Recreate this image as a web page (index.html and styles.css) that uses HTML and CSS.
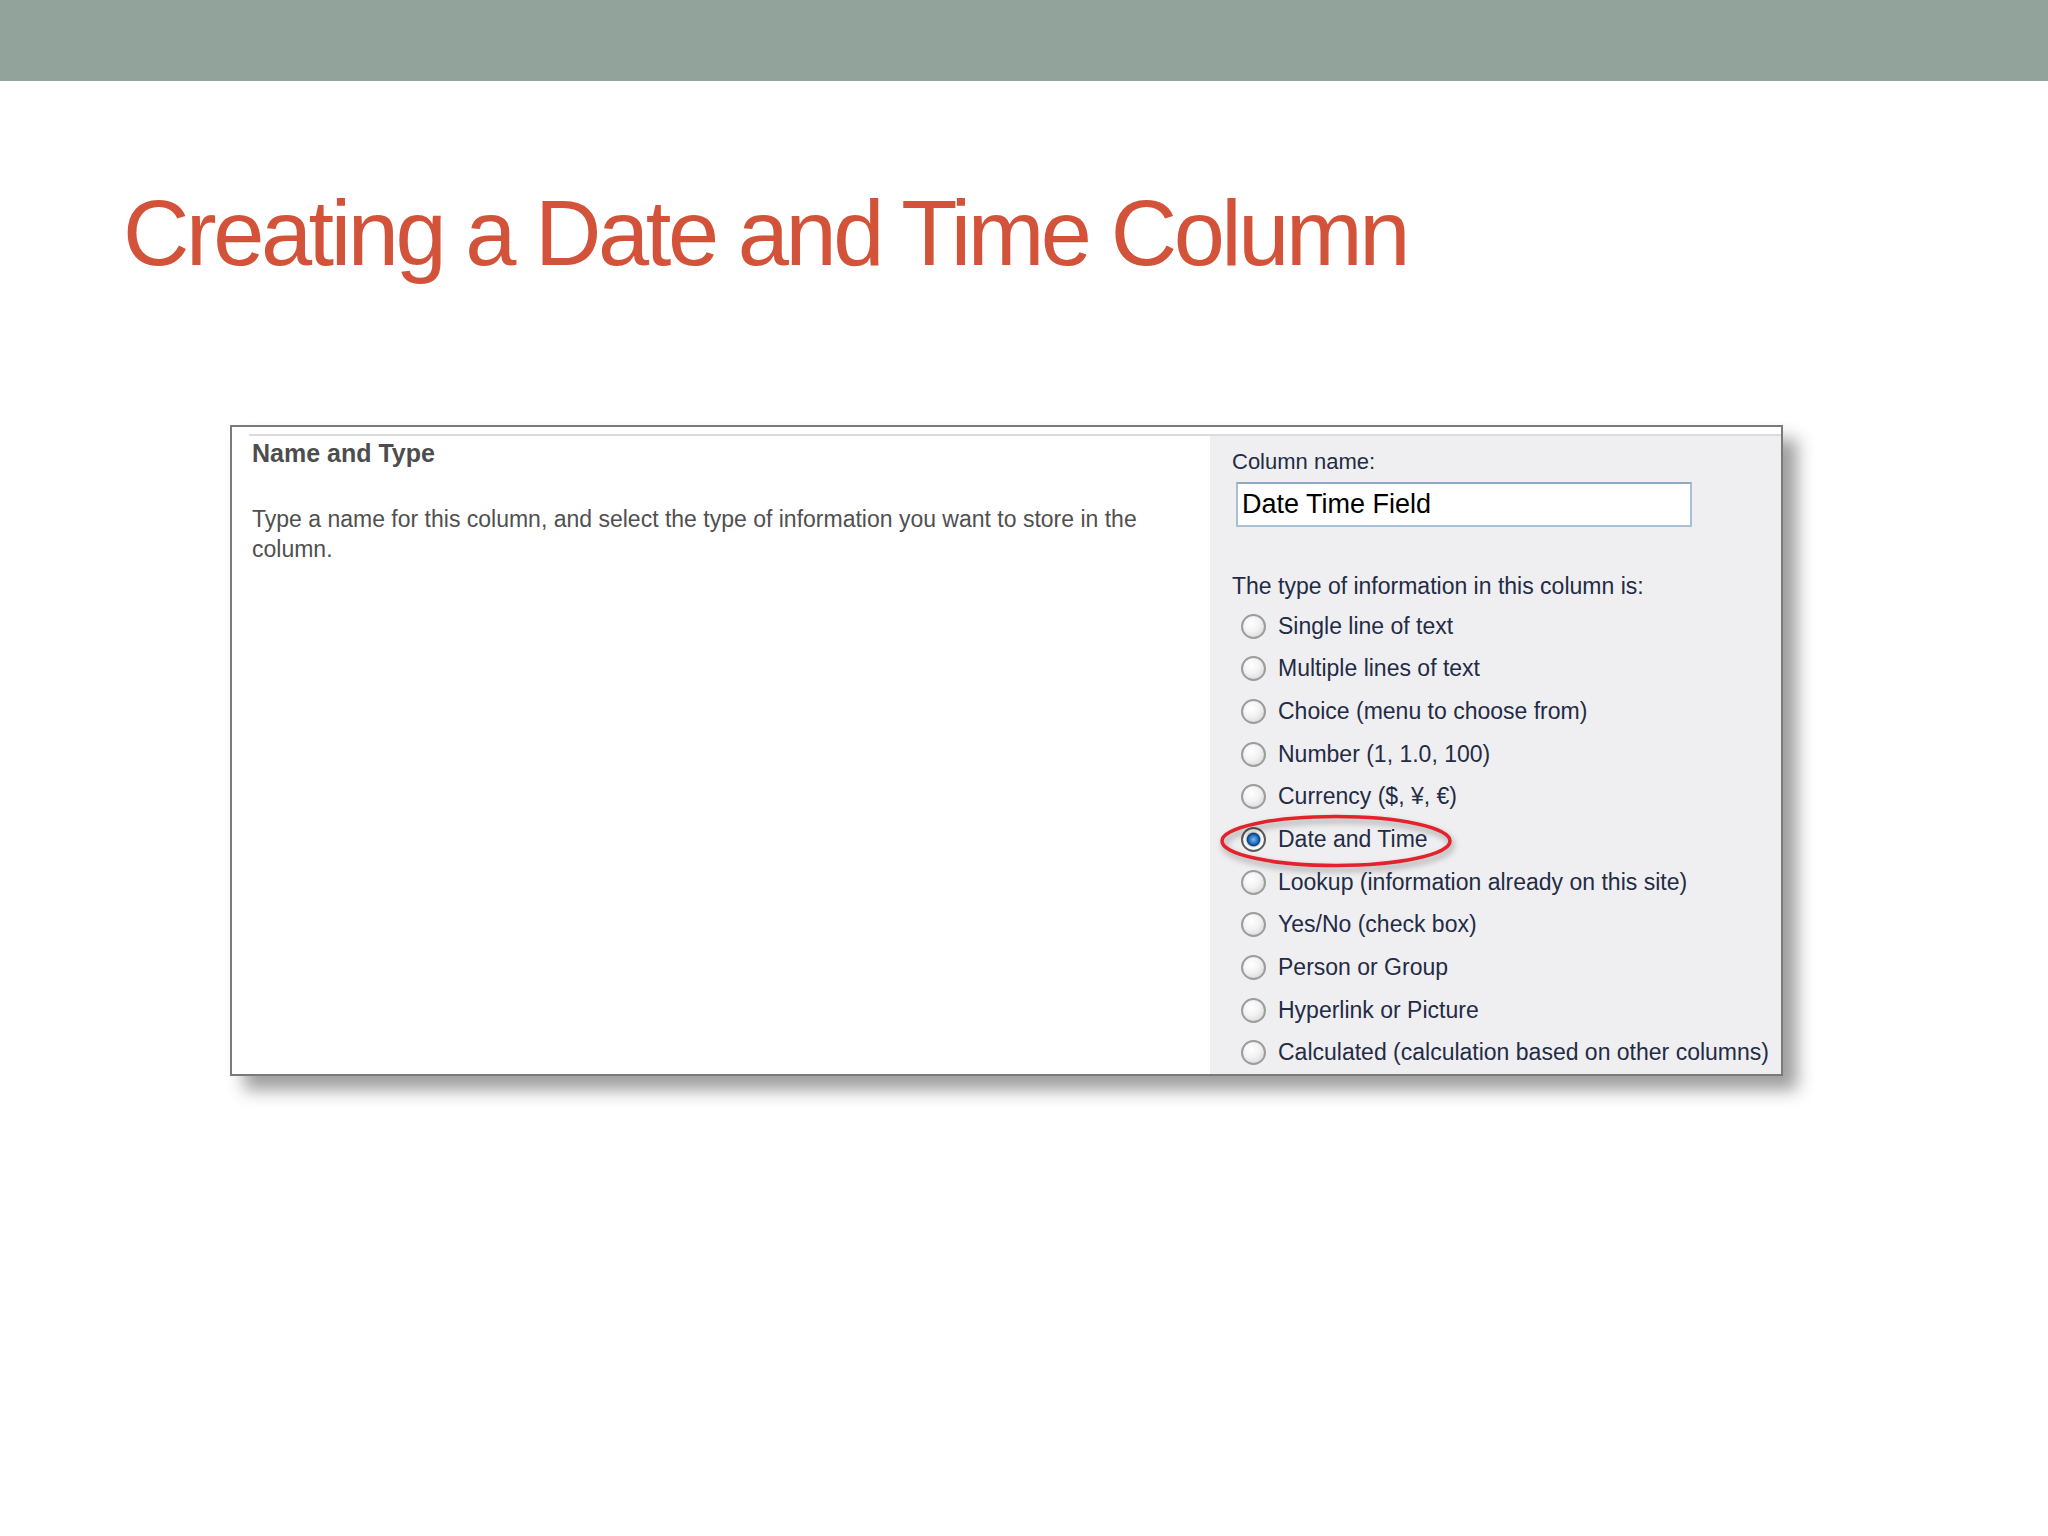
FILE: index.html
```html
<!DOCTYPE html>
<html lang="en">
<head>
<meta charset="utf-8">
<title>Creating a Date and Time Column</title>
<link rel="stylesheet" href="styles.css">
</head>
<body>
<div class="topbar"></div>
<h1 class="title">Creating a Date and Time Column</h1>
<div class="panel">
  <div class="sepline"></div>
  <div class="row">
    <div class="left">
      <div class="heading">Name and Type</div>
      <div class="desc">Type a name for this column, and select the type of information you want to store in the column.</div>
    </div>
    <div class="right">
      <div class="label">Column name:</div>
      <div class="input">Date Time Field</div>
      <div class="label2">The type of information in this column is:</div>
      <div class="options">
        <div class="opt"><span class="radio"></span><span>Single line of text</span></div>
        <div class="opt"><span class="radio"></span><span>Multiple lines of text</span></div>
        <div class="opt"><span class="radio"></span><span>Choice (menu to choose from)</span></div>
        <div class="opt"><span class="radio"></span><span>Number (1, 1.0, 100)</span></div>
        <div class="opt"><span class="radio"></span><span>Currency ($, ¥, €)</span></div>
        <div class="opt selected"><span class="radio checked"></span><span>Date and Time</span>
          <svg class="circle" width="240" height="60" viewBox="0 0 240 60">
            <ellipse cx="118" cy="28" rx="114" ry="24.5" fill="none" stroke="#e3222b" stroke-width="3.5"/>
          </svg>
        </div>
        <div class="opt"><span class="radio"></span><span>Lookup (information already on this site)</span></div>
        <div class="opt"><span class="radio"></span><span>Yes/No (check box)</span></div>
        <div class="opt"><span class="radio"></span><span>Person or Group</span></div>
        <div class="opt"><span class="radio"></span><span>Hyperlink or Picture</span></div>
        <div class="opt"><span class="radio"></span><span>Calculated (calculation based on other columns)</span></div>
      </div>
    </div>
  </div>
</div>
</body>
</html>
```
FILE: styles.css
```css
html, body {
  margin: 0;
  padding: 0;
  background: #ffffff;
}
body {
  width: 2048px;
  height: 1536px;
  overflow: hidden;
  font-family: "Liberation Sans", Arial, sans-serif;
}
.topbar {
  height: 81px;
  background: #92a39b;
}
.title {
  margin: 106px 0 0 123px;
  font-family: "Liberation Sans", Arial, sans-serif;
  font-weight: normal;
  font-size: 92px;
  line-height: 92px;
  letter-spacing: -3.45px;
  color: #d3533a;
}
.panel {
  margin: 146px 0 0 230px;
  width: 1549px;
  border: 2px solid #7a7a7a;
  padding-top: 7px;
  background: #ffffff;
  box-shadow: 14px 14px 16px rgba(40, 40, 40, 0.45);
}
.sepline {
  margin-left: 17px;
  height: 2px;
  background: #dcdcde;
}
.row {
  display: grid;
  grid-template-columns: 978px 1fr;
}
.left {
  padding: 2px 20px 0 20px;
  background: #ffffff;
}
.heading {
  font-size: 25px;
  line-height: 30px;
  font-weight: bold;
  color: #4d4d4d;
}
.desc {
  margin-top: 36px;
  font-size: 23px;
  line-height: 30px;
  color: #505050;
  width: 910px;
}
.right {
  background: #efeff1;
  padding: 13px 0 0 22px;
  color: #232b45;
}
.label {
  font-size: 22px;
  line-height: 26px;
}
.input {
  margin: 7px 0 0 4px;
  width: 448px;
  height: 41px;
  border: 2px solid #aac0d8;
  border-top-color: #8fa9c4;
  background: #ffffff;
  display: flex;
  align-items: center;
  padding-left: 4px;
  font-size: 27px;
  color: #000000;
}
.label2 {
  margin-top: 44px;
  font-size: 23px;
  line-height: 30px;
}
.options {
  margin-top: 4px;
  display: grid;
  grid-auto-rows: 42.65px;
}
.opt {
  position: relative;
  display: flex;
  align-items: center;
  gap: 12px;
  font-size: 23px;
}
.radio {
  margin-left: 9px;
  width: 21px;
  height: 21px;
  border-radius: 50%;
  border: 2px solid #9c9c9c;
  background: radial-gradient(circle at 40% 35%, #ffffff 0%, #f2f2f2 45%, #cfcfcf 100%);
  flex: none;
}
.radio.checked {
  border-color: #5a5a5a;
  background: radial-gradient(circle at 50% 50%, #7db8ee 0%, #1d6fc0 30%, #0e3f78 42%, #e6e6e6 50%, #ffffff 62%, #c4c4c4 100%);
}
.circle {
  position: absolute;
  left: -14px;
  top: -5px;
  filter: drop-shadow(2px 4px 3px rgba(0, 0, 0, 0.35));
  pointer-events: none;
}
```
